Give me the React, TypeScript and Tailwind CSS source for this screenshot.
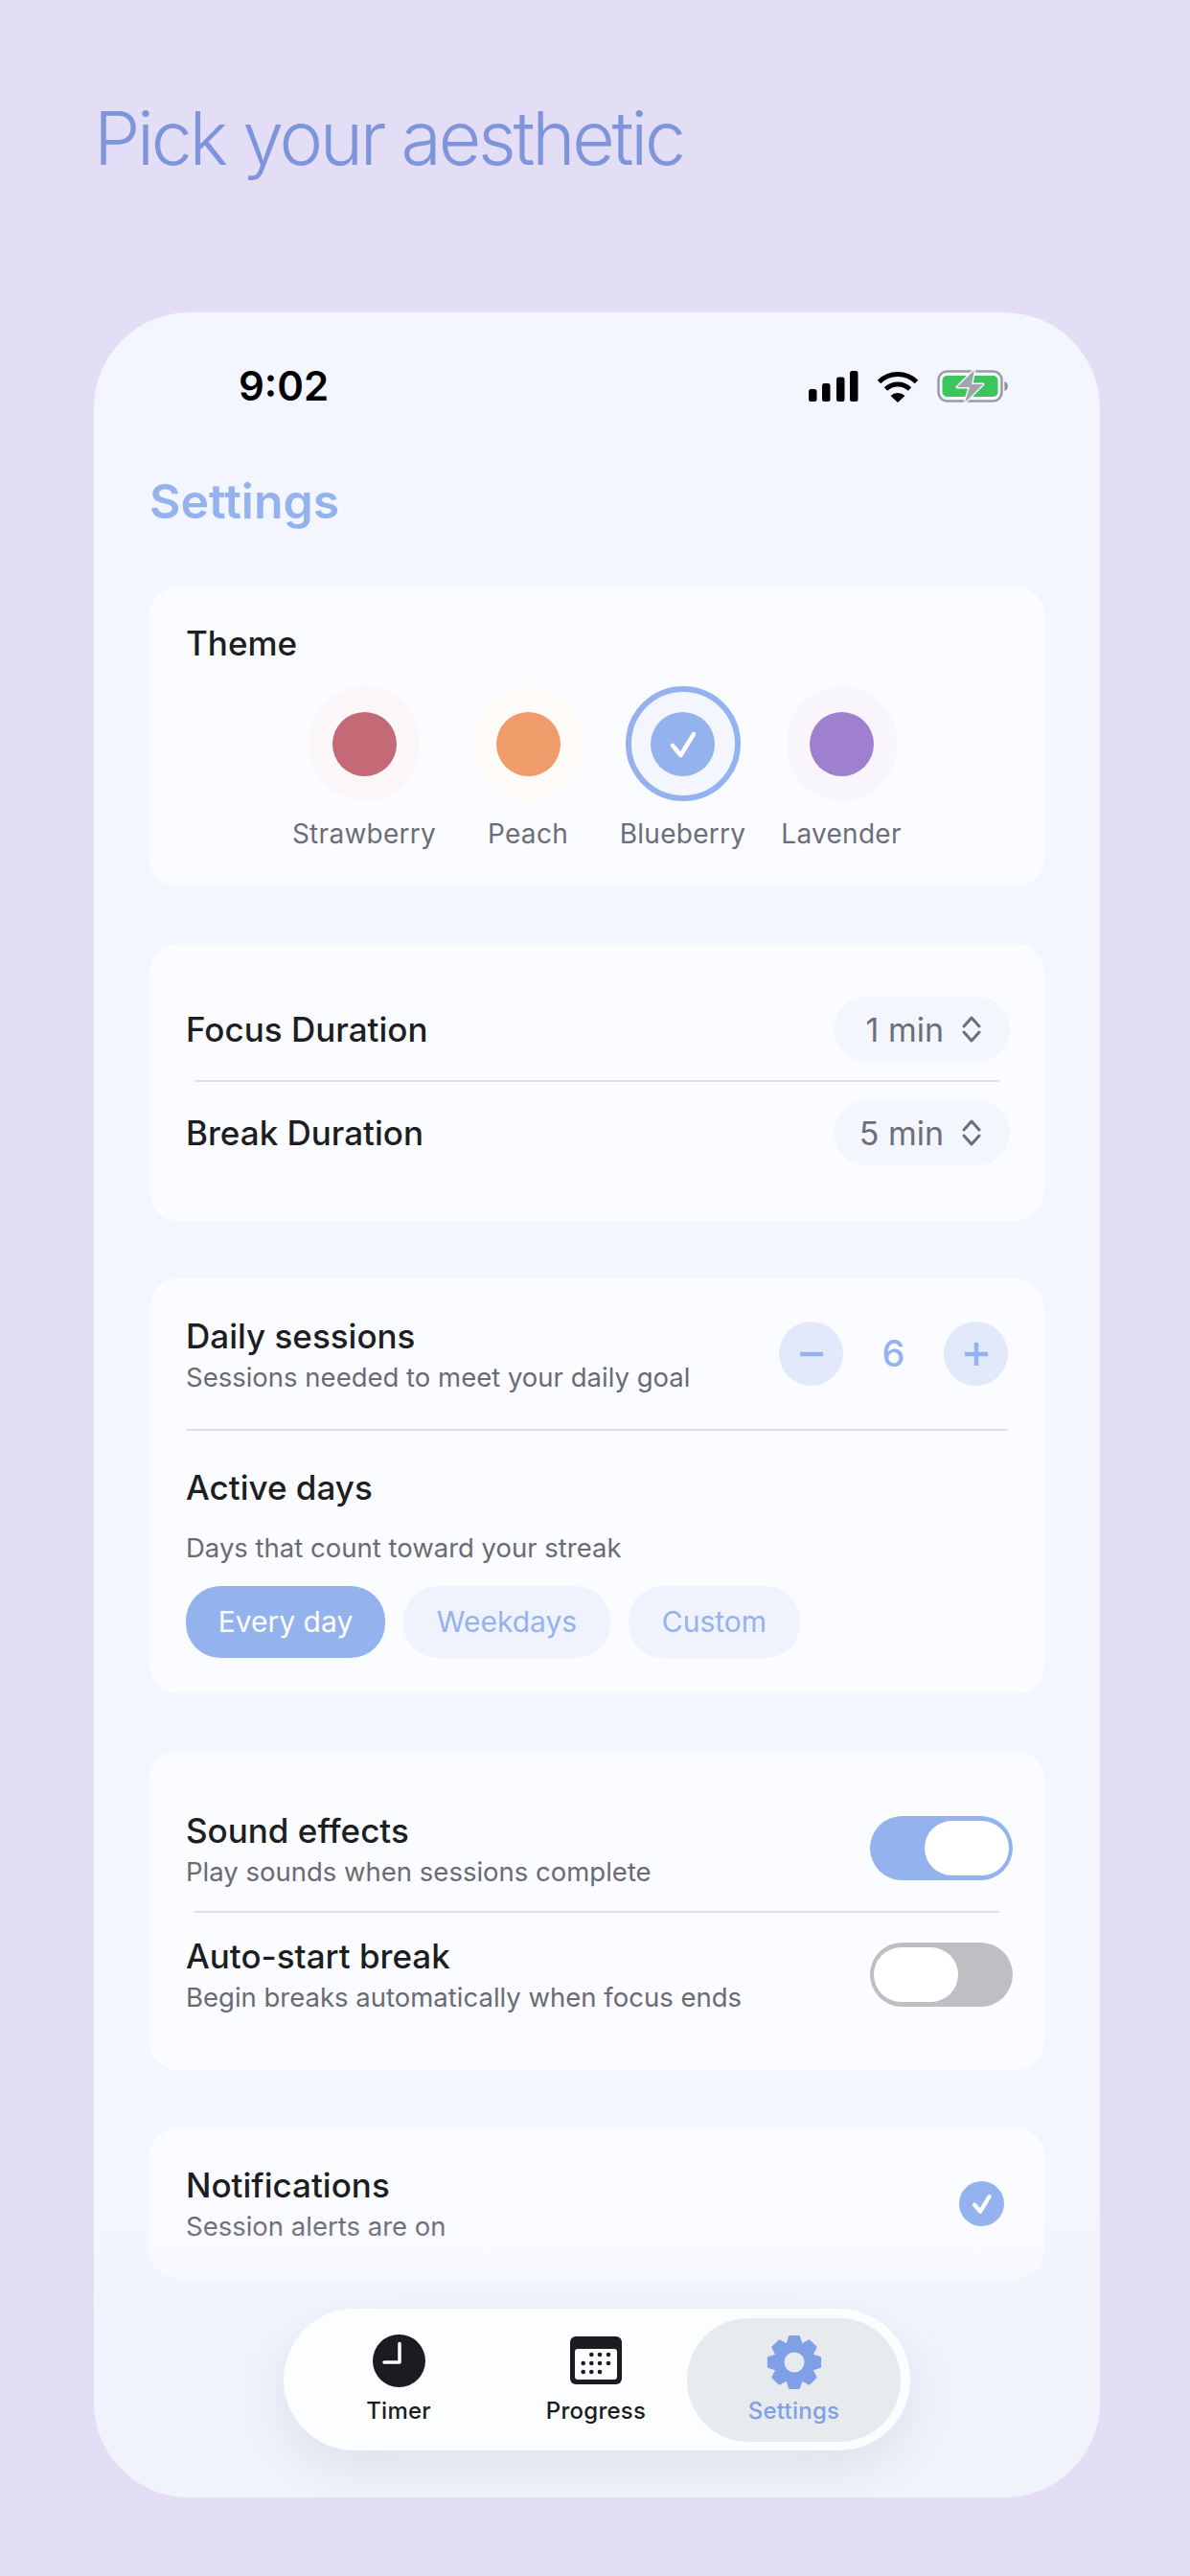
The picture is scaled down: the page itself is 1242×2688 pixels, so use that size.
const THEMES = [
  { name: "Strawberry", color: "bg-[#C46A76]", halo: "bg-[#FBF7F8]", width: "w-[147px]" },
  { name: "Peach", color: "bg-[#F09C6A]", halo: "bg-[#FEFBF8]", width: "w-[115px]" },
  { name: "Blueberry", color: "bg-[#94B2EE]", halo: "bg-[#F4F6FF]", width: "w-[128px]", selected: true },
  { name: "Lavender", color: "bg-[#9F80D0]", halo: "bg-[#F8F5FD]", width: "w-[123px]" },
];

function Check({ size, stroke = 4.5 }: { size: number; stroke?: number }) {
  return (
    <svg width={size} height={size} viewBox="0 0 67 67" fill="none">
      <path d="M23 35 L31.5 45 L45 23" stroke="#fff" strokeWidth={stroke} strokeLinecap="round" strokeLinejoin="round" />
    </svg>
  );
}

function Signal() {
  return (
    <svg width="52" height="32" viewBox="0 0 52 32" fill="#000">
      <rect x="0" y="19" width="8.5" height="13" rx="2.5" />
      <rect x="14" y="13" width="8.5" height="19" rx="2.5" />
      <rect x="29" y="6.5" width="8.5" height="25.5" rx="2.5" />
      <rect x="43" y="0" width="8.5" height="32" rx="2.5" />
    </svg>
  );
}

function Wifi() {
  return (
    <svg width="46" height="33" viewBox="0 0 46 33" fill="none">
      <path d="M3.5 11.5 A28 28 0 0 1 42.5 11.5" stroke="#000" strokeWidth="5" />
      <path d="M10.5 19 A18 18 0 0 1 35.5 19" stroke="#000" strokeWidth="5" />
      <path d="M15.5 26 A11 11 0 0 1 30.5 26 L23 33 Z" fill="#000" />
    </svg>
  );
}

function Battery() {
  return (
    <svg width="74" height="34" viewBox="0 0 74 34" fill="none">
      <rect x="1.5" y="1.5" width="66" height="31" rx="9" stroke="#9A9B9F" strokeWidth="2.5" />
      <rect x="5.5" y="6" width="58" height="22" rx="5" fill="#3CC55C" />
      <path d="M70.5 12 C72.5 12.5 73.8 14.5 73.8 17 C73.8 19.5 72.5 21.5 70.5 22 Z" fill="#8A8B8F" />
      <path d="M39 0 L21 18 H34 L29 34 L48 15 H36 Z" fill="#A3A4A9" stroke="#F3F6FE" strokeWidth="3" strokeLinejoin="round" paintOrder="stroke" />
    </svg>
  );
}

function Stepper() {
  return (
    <svg width="20" height="28" viewBox="0 0 20 28" fill="none" stroke="#6B6F7C" strokeWidth="3" strokeLinecap="round" strokeLinejoin="round">
      <path d="M2 11 L10 2 L18 11" />
      <path d="M2 17 L10 26 L18 17" />
    </svg>
  );
}

function Clock() {
  return (
    <svg width="55" height="55" viewBox="0 0 55 55" fill="none">
      <circle cx="27.5" cy="27.5" r="27.5" fill="#1A1C20" />
      <path d="M28 9.5 V29 H12" stroke="#fff" strokeWidth="3.5" strokeLinecap="round" strokeLinejoin="round" />
    </svg>
  );
}

function Calendar() {
  const dots = [
    [22.3, 19], [31, 19], [40, 19],
    [13.7, 28], [22.3, 28], [31, 28], [40, 28],
    [13.7, 37], [22.3, 37], [31, 37],
  ];
  return (
    <svg width="54" height="50" viewBox="0 0 54 50">
      <rect width="54" height="50" rx="6" fill="#1A1C20" />
      <rect x="5" y="13" width="44" height="32" rx="3" fill="#FBFDFF" />
      {dots.map(([x, y]) => (
        <circle key={`${x}-${y}`} cx={x} cy={y} r="2.3" fill="#1A1C20" />
      ))}
    </svg>
  );
}

function gearPath() {
  const teeth = 8;
  const outer = 27;
  const inner = 20;
  let d = "";
  for (let i = 0; i < teeth; i++) {
    const a = (i * Math.PI * 2) / teeth - Math.PI / 2;
    const pts = [
      [inner, a - 0.36],
      [outer, a - 0.17],
      [outer, a + 0.17],
      [inner, a + 0.36],
    ];
    pts.forEach(([r, t], j) => {
      const x = (29 + r * Math.cos(t)).toFixed(2);
      const y = (29 + r * Math.sin(t)).toFixed(2);
      d += `${i === 0 && j === 0 ? "M" : "L"}${x} ${y} `;
    });
  }
  return d + "Z";
}

function Gear() {
  return (
    <svg width="58" height="58" viewBox="0 0 58 58">
      <path d={gearPath()} fill="#7FA0E6" stroke="#7FA0E6" strokeWidth="3" strokeLinejoin="round" />
      <circle cx="29" cy="29" r="10.5" fill="#E8EBEE" />
    </svg>
  );
}

function Row({ title, sub }: { title: string; sub: string }) {
  return (
    <div className="flex flex-col">
      <div className="text-[35px] leading-[42px] font-medium text-[#1D1E22]">{title}</div>
      <div className="mt-[5px] text-[27.5px] leading-[34px] text-[#6A6B72]">{sub}</div>
    </div>
  );
}

function Duration({ label, value }: { label: string; value: string }) {
  return (
    <div className="flex items-center justify-between h-[68px]">
      <span className="text-[35px] font-medium text-[#1D1E22]">{label}</span>
      <div className="flex items-center justify-end gap-[19px] w-[184px] h-[68px] pr-[30px] rounded-[34px] bg-[#F4F6FE] -mr-[2px]">
        <span className="text-[34px] text-[#6B6F7C]">{value}</span>
        <Stepper />
      </div>
    </div>
  );
}

function RoundButton({ plus }: { plus?: boolean }) {
  return (
    <div className="flex items-center justify-center w-[67px] h-[67px] rounded-full bg-[#E2E9FA]">
      <svg width="24" height="24" viewBox="0 0 24 24" fill="none" stroke="#94B2EE" strokeWidth="4.5">
        <path d="M0 12 H24" />
        {plus && <path d="M12 0 V24" />}
      </svg>
    </div>
  );
}

export default function App() {
  return (
    <div className="w-[1242px] h-[2688px] bg-[#E4DDF6] font-['Inter',sans-serif] overflow-hidden">
      <div className="h-[326px] pl-[98px] pt-[98px]">
        <h1 className="text-[77px] leading-[93px] font-light tracking-[-0.0425em] text-[#7E95DC]">Pick your aesthetic</h1>
      </div>

      <div className="relative w-[1050px] h-[2280px] ml-[98px] rounded-[100px] bg-[#F4F6FF] overflow-hidden">
        <div className="flex items-center justify-between h-[34px] mt-[60px] pl-[151px] pr-[96px]">
          <span className="text-[42px] leading-[34px] font-semibold text-black">9:02</span>
          <div className="flex items-center gap-[18px]">
            <Signal />
            <Wifi />
            <Battery />
          </div>
        </div>

        <div className="px-[58px] pt-[73px]">
          <h2 className="text-[50px] leading-[60px] font-semibold text-[#94B2EE]">Settings</h2>

          <div className="flex flex-col gap-[60px] mt-[59px]">
            <section className="h-[313px] pt-[37px] rounded-[30px] bg-[#FBFCFF]">
              <div className="pl-[38px] text-[35px] leading-[44px] font-medium text-[#1D1E22]">Theme</div>
              <div className="flex justify-center gap-10 mt-[23px]">
                {THEMES.map((t) => (
                  <div key={t.name} className={`flex flex-col items-center ${t.width}`}>
                    <div
                      className={`flex items-center justify-center rounded-full ${t.halo} ${
                        t.selected ? "w-[120px] h-[120px] border-[6px] border-[#94B2EE]" : "w-[115px] h-[120px]"
                      }`}
                    >
                      <div className={`flex items-center justify-center w-[67px] h-[67px] rounded-full ${t.color}`}>
                        {t.selected && <Check size={67} />}
                      </div>
                    </div>
                    <span className="mt-[16px] text-[28px] leading-[36px] tracking-[0.01em] whitespace-nowrap text-[#6B6D78]">{t.name}</span>
                  </div>
                ))}
              </div>
            </section>

            <section className="h-[289px] pt-[55px] px-[38px] rounded-[30px] bg-[#FBFCFF]">
              <Duration label="Focus Duration" value="1 min" />
              <div className="h-[2px] mx-[9px] my-[19px] bg-[#DEDFE4]" />
              <Duration label="Break Duration" value="5 min" />
            </section>

            <section className="h-[433px] pt-[39px] px-[38px] rounded-[30px] bg-[#FBFCFF]">
              <div className="flex items-start justify-between">
                <Row title="Daily sessions" sub="Sessions needed to meet your daily goal" />
                <div className="flex items-center mt-[6px]">
                  <RoundButton />
                  <div className="w-[105px] text-center text-[38px] font-medium text-[#94B2EE]">6</div>
                  <RoundButton plus />
                </div>
              </div>
              <div className="h-[2px] mt-[37px] bg-[#DEDFE4]" />
              <div className="mt-[38px] text-[35px] leading-[42px] font-medium text-[#1D1E22]">Active days</div>
              <div className="mt-[25px] text-[27.5px] leading-[34px] text-[#6A6B72]">Days that count toward your streak</div>
              <div className="flex gap-[19px] mt-[23px]">
                <div className="flex items-center justify-center w-[208px] h-[75px] rounded-[36px] bg-[#94B2EE] text-[30px] text-white">Every day</div>
                <div className="flex items-center justify-center w-[216px] h-[75px] rounded-[36px] bg-[#F0F2FD] text-[30px] text-[#94B2EE]">Weekdays</div>
                <div className="flex items-center justify-center w-[179px] h-[75px] rounded-[36px] bg-[#F0F2FD] text-[30px] text-[#94B2EE]">Custom</div>
              </div>
            </section>

            <section className="h-[333px] pt-[62px] px-[38px] rounded-[30px] bg-[#FBFCFF]">
              <div className="flex items-center justify-between h-[80px]">
                <Row title="Sound effects" sub="Play sounds when sessions complete" />
                <div className="flex items-center justify-end w-[149px] h-[67px] pr-[4px] -mr-[5px] -mt-[2px] rounded-full bg-[#94B2EE]">
                  <div className="w-[88px] h-[57px] rounded-full bg-white" />
                </div>
              </div>
              <div className="h-[2px] mx-[9px] mt-[25px] bg-[#DEDFE4]" />
              <div className="flex items-center justify-between h-[80px] mt-[24px]">
                <Row title="Auto-start break" sub="Begin breaks automatically when focus ends" />
                <div className="flex items-center w-[149px] h-[67px] pl-[4px] -mr-[5px] rounded-full bg-[#BEBFC2]">
                  <div className="w-[88px] h-[57px] rounded-full bg-white" />
                </div>
              </div>
            </section>

            <section className="flex items-center justify-between h-[158px] px-[38px] rounded-[30px] bg-[#FBFCFF]">
              <Row title="Notifications" sub="Session alerts are on" />
              <div className="flex items-center justify-center w-[47px] h-[47px] mr-[4px] rounded-full bg-[#94B2EE]">
                <Check size={47} stroke={6} />
              </div>
            </section>
          </div>
        </div>

        <div className="absolute inset-x-0 bottom-0 h-[290px] bg-gradient-to-b from-[#F0F3FB00] via-[#F0F3FB] via-50% to-[#F0F3FB]" />

        <nav className="absolute left-[198px] bottom-[49px] flex items-center w-[654px] h-[148px] pl-[9px] rounded-[74px] bg-[#FBFDFF] shadow-[0_18px_50px_rgba(90,100,140,0.12)]">
          <div className="flex flex-col items-center w-[222px]">
            <Clock />
            <span className="mt-[10px] text-[24px] leading-[30px] font-medium tracking-[0.01em] text-[#1A1C20]">Timer</span>
          </div>
          <div className="flex flex-col items-center w-[190px]">
            <div className="flex items-center h-[55px]">
              <Calendar />
            </div>
            <span className="mt-[10px] text-[24px] leading-[30px] font-medium tracking-[0.01em] text-[#1A1C20]">Progress</span>
          </div>
          <div className="flex flex-col items-center justify-center w-[223px] h-[129px] rounded-[64px] bg-[#E8EBEE]">
            <Gear />
            <span className="mt-[7px] text-[24px] leading-[30px] font-medium tracking-[0.01em] text-[#7FA0E6]">Settings</span>
          </div>
        </nav>
      </div>
    </div>
  );
}
